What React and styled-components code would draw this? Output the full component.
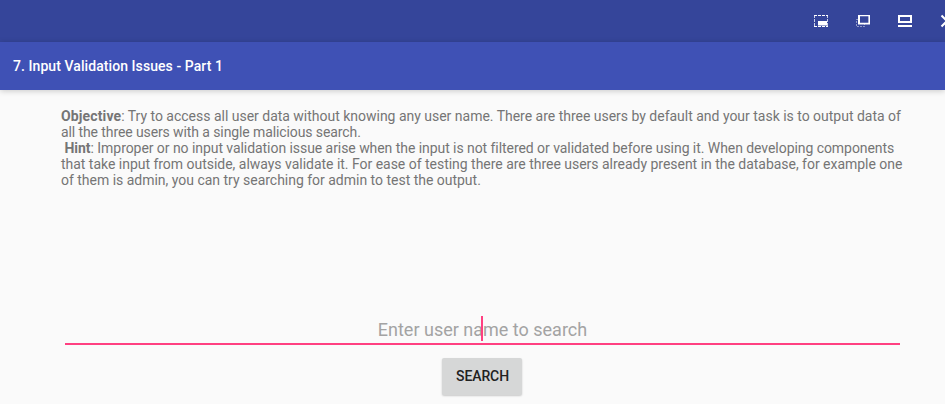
import React from "react";
import styled, { createGlobalStyle } from "styled-components";

const Global = createGlobalStyle`
  * { box-sizing: border-box; }
  body { margin: 0; background: #fafafa; font-family: Roboto, sans-serif; overflow: hidden; }
`;
const Screen = styled.div`
  width: 945px; height: 404px; overflow: hidden; display: flex; flex-direction: column; background: #fafafa;
`;
const CaptionBar = styled.header`
  height: 42px; flex: none; background: #35459a; color: #fff;
  display: flex; align-items: center; gap: 26px; padding-left: 813px;
`;
const IconSvg = styled.svg`
  flex: none; display: block; fill: none; stroke: currentColor;
`;
const TitleBar = styled.div`
  height: 48px; flex: none; background: #3f51b5; display: flex; align-items: center; padding-left: 13px;
  box-shadow: 0 1px 6px rgba(0,0,0,.2);
`;
const Title = styled.h1`
  margin: 0; color: #fff; font-size: 14px; font-weight: 500; line-height: 16px; letter-spacing: .07px; white-space: nowrap;
`;
const Content = styled.main`
  flex: 1; display: flex; flex-direction: column; align-items: center; padding-top: 18px;
`;
const Description = styled.div`
  align-self: flex-start; padding-left: 61px; height: 208px;
  color: #757575; font-size: 14px; line-height: 16px;
`;
const Line = styled.div`
  white-space: pre; letter-spacing: ${(p) => p.$tracking || 0}px;
`;
const Term = styled.b`
  letter-spacing: ${(p) => p.$tracking || 0}px;
`;
const Field = styled.div`
  width: 835px; height: 29px; margin-left: 20px; border-bottom: 2px solid #ff4081;
  display: flex; justify-content: center; position: relative;
`;
const Hint = styled.span`
  color: #a3a3a3; font-size: 18px; line-height: 27px; white-space: nowrap;
`;
const Caret = styled.i`
  position: absolute; left: 416px; top: 0; width: 2px; height: 25px; background: #ff4081;
`;
const SearchButton = styled.button`
  margin: 13px 0 0 19px; width: 80px; height: 37px; padding: 0 0 0 1px; border: 0; border-radius: 2px;
  background: #d6d7d7; color: #212121; font: 500 14px/37px Roboto, sans-serif; letter-spacing: -.1px;
  box-shadow: 0 1px 2px rgba(0,0,0,.2);
`;
const Icon = ({ children }) => (
  <IconSvg width="16" height="16" viewBox="0 0 16 16">{children}</IconSvg>
);

export default function App() {
  return (
    <Screen>
      <Global />
      <CaptionBar>
        <Icon>
          <path d="M1 2.5h14M1 13.5h14" strokeDasharray="3 1" />
          <path d="M1.5 2v12M14.5 2v12" strokeDasharray="3 1" strokeOpacity=".75" />
          <rect x="5" y="8" width="9" height="4.5" fill="currentColor" stroke="none" />
        </Icon>
        <Icon>
          <path d="M3 6.5H1.5v7H9.5V11" strokeDasharray="2 1" strokeOpacity=".45" />
          <path fillRule="evenodd" d="M3 2h12v9.4H3zM5 3.2v6.6h8.4V3.2z" fill="currentColor" stroke="none" />
        </Icon>
        <Icon><rect x="2" y="3" width="12" height="6" strokeWidth="2" /><path d="M1 13h14" strokeWidth="2" /></Icon>
        <Icon><path d="M2.5 2.5l11 11M13.5 2.5l-11 11" strokeWidth="2" /></Icon>
      </CaptionBar>
      <TitleBar><Title>7. Input Validation Issues - Part 1</Title></TitleBar>
      <Content>
        <Description>
          <Line $tracking={-0.014}><Term $tracking={0.13}>Objective</Term>: Try to access all user data without knowing any user name. There are three users by default and your task is to output data of</Line>
          <Line $tracking={-0.1}>all the three users with a single malicious search.</Line>
          <Line $tracking={-0.058}>{" "}<Term>Hint</Term>: Improper or no input validation issue arise when the input is not filtered or validated before using it. When developing components</Line>
          <Line $tracking={-0.022}>that take input from outside, always validate it. For ease of testing there are three users already present in the database, for example one</Line>
          <Line $tracking={-0.014}>of them is admin, you can try searching for admin to test the output.</Line>
        </Description>
        <Field><Hint>Enter user name to search</Hint><Caret /></Field>
        <SearchButton>SEARCH</SearchButton>
      </Content>
    </Screen>
  );
}
